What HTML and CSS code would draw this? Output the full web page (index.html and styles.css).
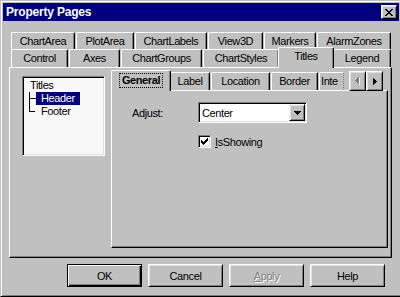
FILE: index.html
```html
<!DOCTYPE html>
<html lang="en">
<head>
    <meta charset="UTF-8">
    <title>Property Pages</title>
    <link rel="stylesheet" href="styles.css">
</head>
<body>
    <div class="window">
        <div class="titlebar">
            <span class="title">Property Pages</span>
            <button class="close-btn">
                <svg width="8" height="7" viewBox="0 0 8 7" shape-rendering="crispEdges"><path d="M0 0h2v1H0z M6 0h2v1H6z M1 1h2v1H1z M5 1h2v1H5z M2 2h4v1H2z M3 3h2v1H3z M2 4h4v1H2z M1 5h2v1H1z M5 5h2v1H5z M0 6h2v1H0z M6 6h2v1H6z" fill="#000"/></svg>
            </button>
        </div>

        <div class="content">
            <div class="tab-row row-back">
                <div class="tab">ChartArea</div>
                <div class="tab">PlotArea</div>
                <div class="tab">ChartLabels</div>
                <div class="tab">View3D</div>
                <div class="tab">Markers</div>
                <div class="tab">AlarmZones</div>
            </div>
            <div class="tab-row row-front">
                <div class="tab">Control</div>
                <div class="tab">Axes</div>
                <div class="tab">ChartGroups</div>
                <div class="tab">ChartStyles</div>
                <div class="tab active">Titles</div>
                <div class="tab">Legend</div>
            </div>

            <div class="panel">
                <div class="tree">
                    <div class="tree-node">Titles</div>
                    <div class="tree-children">
                        <svg class="tree-lines" width="7" height="20" viewBox="0 0 7 20" shape-rendering="crispEdges">
                            <rect x="0" y="0" width="1" height="20" fill="#000"/>
                            <rect x="0" y="6" width="7" height="1" fill="#000"/>
                            <rect x="0" y="19" width="6" height="1" fill="#000"/>
                        </svg>
                        <div class="tree-items">
                            <div class="tree-node selected">Header</div>
                            <div class="tree-node">Footer</div>
                        </div>
                    </div>
                </div>

                <div class="subtabs">
                    <div class="tab-row row-sub">
                        <div class="tab active"><span class="focus">General</span></div>
                        <div class="tab">Label</div>
                        <div class="tab">Location</div>
                        <div class="tab">Border</div>
                        <div class="tab cut">Inte</div>
                        <div class="tab-scroll">
                            <button class="scroll-btn" disabled>
                                <svg width="5" height="8" viewBox="0 0 5 8" shape-rendering="crispEdges">
                                    <path d="M4 1h1v7H4z M3 2h1v5H3z M2 3h1v3H2z M1 4h1v1H1z" fill="#fff"/>
                                    <path d="M3 0h1v7H3z M2 1h1v5H2z M1 2h1v3H1z M0 3h1v1H0z" fill="#808080"/>
                                </svg>
                            </button>
                            <button class="scroll-btn">
                                <svg width="4" height="7" viewBox="0 0 4 7" shape-rendering="crispEdges"><path d="M0 0h1v7H0z M1 1h1v5H1z M2 2h1v3H2z M3 3h1v1H3z" fill="#000"/></svg>
                            </button>
                        </div>
                    </div>
                    <div class="subpanel">
                        <div class="field">
                            <span class="field-label">Adjust:</span>
                            <div class="combo">
                                <span class="combo-text">Center</span>
                                <span class="combo-btn">
                                    <svg width="7" height="4" viewBox="0 0 7 4" shape-rendering="crispEdges"><path d="M0 0h7v1H0z M1 1h5v1H1z M2 2h3v1H2z M3 3h1v1H3z" fill="#000"/></svg>
                                </span>
                            </div>
                        </div>
                        <div class="check-row">
                            <span class="checkbox">
                                <svg width="7" height="7" viewBox="0 0 7 7" shape-rendering="crispEdges"><path d="M6 0h1v1H6z M5 1h2v1H5z M0 2h1v1H0z M4 2h3v1H4z M0 3h2v1H0z M3 3h3v1H3z M0 4h5v1H0z M1 5h3v1H1z M2 6h1v1H2z" fill="#000"/></svg>
                            </span>
                            <span class="check-label"><u>I</u>sShowing</span>
                        </div>
                    </div>
                </div>
            </div>

            <div class="buttons">
                <button class="btn default">OK</button>
                <button class="btn">Cancel</button>
                <button class="btn" disabled><u>A</u>pply</button>
                <button class="btn">Help</button>
            </div>
        </div>
    </div>
</body>
</html>
```

FILE: styles.css
```css
* {
    box-sizing: border-box;
}

body {
    margin: 0;
    width: 400px;
    height: 297px;
    overflow: hidden;
    background-color: #c0c0c0;
    font-family: "Liberation Sans", Arial, sans-serif;
    font-size: 11px;
    letter-spacing: -0.4px;
    color: #000;
}

button {
    font: inherit;
    letter-spacing: inherit;
    color: inherit;
    padding: 0;
}

/* Окно */
.window {
    width: 402px;
    height: 297px;
    padding: 2px;
    border: 1px solid;
    border-color: #c0c0c0 #000 #000 #c0c0c0;
    box-shadow: inset 1px 1px #fff, inset -1px -1px #808080;
}

.titlebar {
    height: 18px;
    display: flex;
    align-items: center;
    justify-content: space-between;
    padding: 0 2px 0 3px;
    background-color: #000080;
    color: #fff;
}

.title {
    font-weight: bold;
    font-size: 12px;
    letter-spacing: -0.2px;
}

.close-btn,
.scroll-btn,
.combo-btn,
.btn {
    background-color: #c0c0c0;
    border: 1px solid;
    border-color: #fff #000 #000 #fff;
    box-shadow: inset 1px 1px #dfdfdf, inset -1px -1px #808080;
}

.close-btn {
    width: 16px;
    height: 14px;
    display: flex;
    align-items: center;
    justify-content: center;
}

.content {
    padding: 11px 7px 0 6px;
}

/* Вкладки */
.tab-row {
    display: flex;
    align-items: flex-start;
    padding-left: 2px;
}

.tab {
    height: 18px;
    margin-right: 1px;
    border: 1px solid;
    border-color: #fff #000 #000 #fff;
    border-bottom: none;
    border-radius: 2px 2px 0 0;
    box-shadow: inset -1px 0 #808080;
    background-color: #c0c0c0;
    line-height: 17px;
    text-align: center;
    white-space: nowrap;
}

.tab.active {
    height: 21px;
    margin: -2px -1px -1px -2px;
    position: relative;
    z-index: 1;
}

.row-back .tab {
    height: 17px;
}

.row-back .tab:nth-child(1) { width: 64px; }
.row-back .tab:nth-child(2) { width: 58px; }
.row-back .tab:nth-child(3) { width: 72px; }
.row-back .tab:nth-child(4) { width: 55px; }
.row-back .tab:nth-child(5) { width: 52px; }
.row-back .tab:nth-child(6) { width: 74px; }

.row-front .tab:nth-child(1) { width: 57px; }
.row-front .tab:nth-child(2) { width: 51px; }
.row-front .tab:nth-child(3) { width: 81px; }
.row-front .tab:nth-child(4) { width: 76px; }
.row-front .tab:nth-child(5) { width: 56px; }
.row-front .tab:nth-child(6) { width: 58px; }

.row-sub .tab:nth-child(1) { width: 60px; }
.row-sub .tab:nth-child(2) { width: 40px; }
.row-sub .tab:nth-child(3) { width: 59px; }
.row-sub .tab:nth-child(4) { width: 47px; }

.row-sub .tab.active {
    line-height: normal;
    padding-top: 2px;
}

.focus {
    display: inline-block;
    height: 15px;
    padding: 0 2px;
    border: 1px dotted #000;
    line-height: 13px;
    font-weight: bold;
    vertical-align: top;
}

.tab.cut {
    width: 25px;
    margin-right: 0;
    border-right: 1px dotted #808080;
    border-top-right-radius: 0;
    box-shadow: none;
    text-align: left;
    padding-left: 1px;
}

.tab-scroll {
    display: flex;
    margin: -1px 0 -1px 5px;
    position: relative;
    z-index: 1;
}

.scroll-btn {
    width: 17px;
    height: 20px;
    display: flex;
    align-items: center;
    justify-content: center;
}

/* Панели */
.panel {
    height: 191px;
    display: flex;
    align-items: flex-start;
    gap: 6px;
    padding: 0 3px 0 12px;
    border: 1px solid;
    border-color: #fff #000 #000 #fff;
    box-shadow: inset -1px -1px #808080;
}

.tree {
    width: 83px;
    height: 80px;
    margin-top: 8px;
    padding: 2px 0 0 7px;
    background-color: #f8f8f8;
    border: 1px solid;
    border-color: #808080 #fff #fff #808080;
    box-shadow: inset 1px 1px #000, inset -1px -1px #dfdfdf;
}

.tree-node {
    display: inline-block;
    height: 13px;
    line-height: 13px;
}

.tree-children {
    display: flex;
    margin-left: -1px;
}

.tree-items {
    display: flex;
    flex-direction: column;
    align-items: flex-start;
}

.tree-items .tree-node {
    padding: 0 5px;
}

.tree-node.selected {
    background-color: #000080;
    color: #fff;
}

.subtabs {
    width: 277px;
    padding-top: 4px;
}

.subpanel {
    height: 158px;
    padding: 11px 0 0 20px;
    border: 1px solid;
    border-color: #fff #000 #000 #fff;
    box-shadow: inset -1px -1px #808080;
}

.field {
    display: flex;
    align-items: center;
}

.field-label {
    width: 66px;
}

.combo {
    width: 109px;
    height: 21px;
    display: flex;
    align-items: center;
    justify-content: space-between;
    padding: 0 0 0 3px;
    background-color: #fff;
    border: 1px solid;
    border-color: #808080 #fff #fff #808080;
    box-shadow: inset 1px 1px #000, inset -1px -1px #dfdfdf;
}

.combo-btn {
    width: 16px;
    height: 17px;
    margin-right: 1px;
    display: flex;
    align-items: center;
    justify-content: center;
}

.check-row {
    display: flex;
    align-items: center;
    margin-top: 12px;
    padding-left: 66px;
}

.checkbox {
    width: 13px;
    height: 13px;
    display: flex;
    align-items: center;
    justify-content: center;
    background-color: #fff;
    border: 1px solid;
    border-color: #808080 #fff #fff #808080;
    box-shadow: inset 1px 1px #000, inset -1px -1px #dfdfdf;
}

.check-label {
    margin-left: 4px;
}

/* Кнопки внизу */
.buttons {
    display: flex;
    justify-content: flex-end;
    gap: 6px;
    margin: 6px 7px 0 0;
}

.btn {
    width: 75px;
    height: 23px;
}

.btn.default {
    border-color: #000;
    box-shadow: inset 1px 1px #fff, inset -1px -1px #000, inset -2px -2px #808080;
}

.btn:disabled {
    color: #808080;
    text-shadow: 1px 1px 0 #fff;
}
```
